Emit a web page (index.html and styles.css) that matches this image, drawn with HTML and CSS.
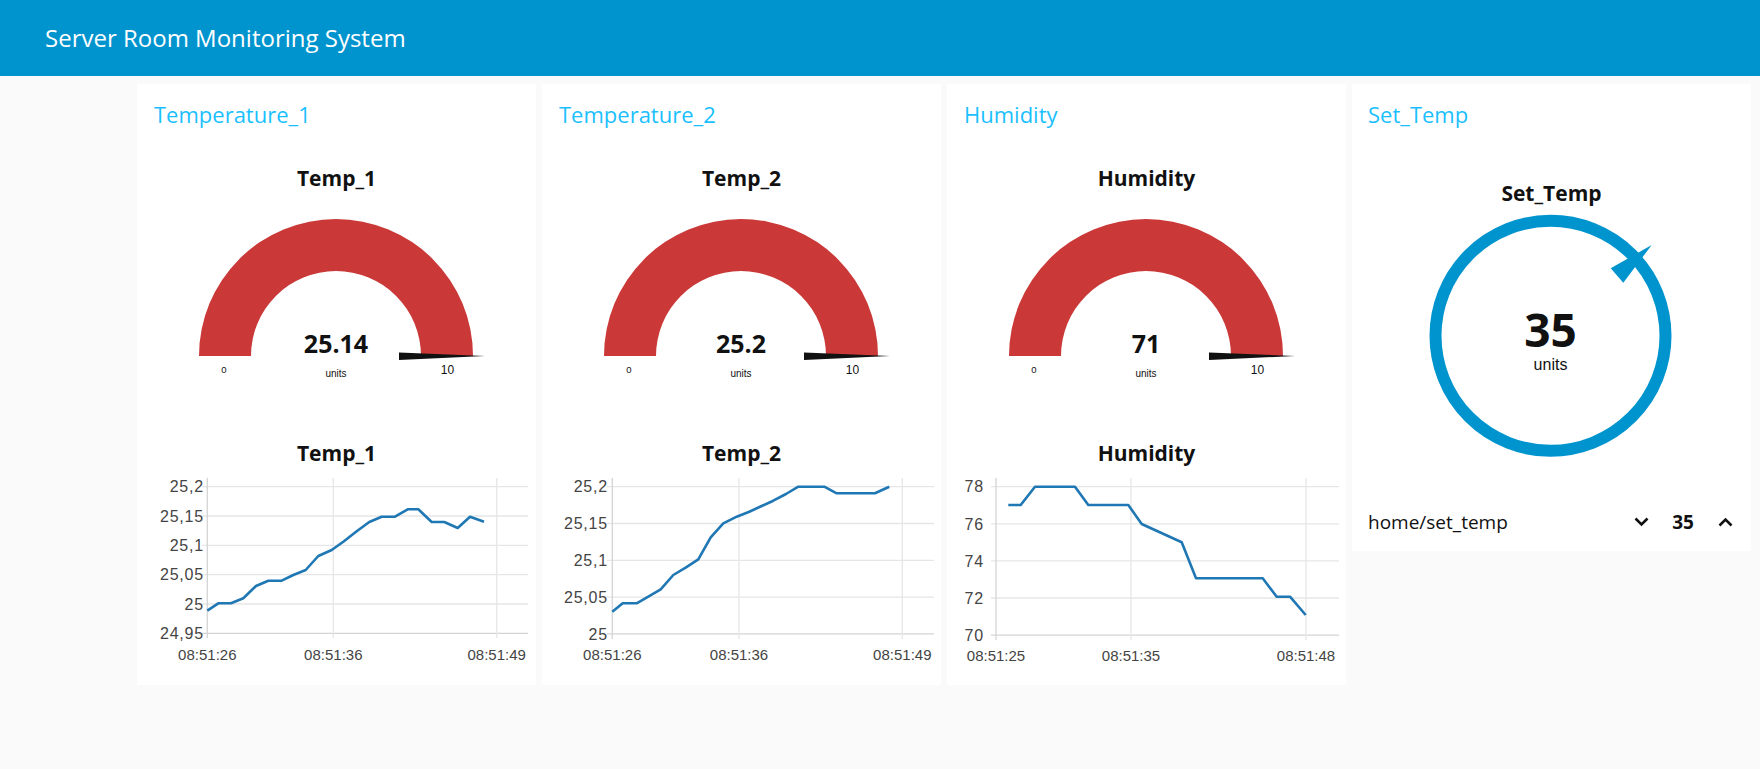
FILE: index.html
```html
<!DOCTYPE html>
<html lang="en">
<head>
<meta charset="utf-8">
<title>Server Room Monitoring System</title>
<link rel="stylesheet" href="styles.css">
</head>
<body>
<header class="topbar">Server Room Monitoring System</header>
<main class="board">
  <section class="card card-tall">
    <div class="group-title">Temperature_1</div>
    <svg class="gauge" width="399" height="250" viewBox="0 0 399 250">
      <text class="g-title" x="199.5" y="41">Temp_1</text>
      <path class="g-arc" d="M62 211 A137 137 0 0 1 336 211 L284 211 A85 85 0 0 0 114 211 Z"/>
      <polygon class="g-needle" points="262,207.5 348,211 262,215"/>
      <text class="g-value" x="199" y="208.3">25.14</text>
      <text class="g-min" x="87" y="228">0</text>
      <text class="g-units" x="199" y="232">units</text>
      <text class="g-max" x="310.5" y="228.5">10</text>
    </svg>
    <svg class="chart" width="399" height="290" viewBox="0 0 399 290">
      <text class="c-title" x="199.5" y="66">Temp_1</text>
      <g class="grid">
        <line x1="65" y1="91.7" x2="391" y2="91.7"/>
        <line x1="65" y1="121" x2="391" y2="121"/>
        <line x1="65" y1="150.3" x2="391" y2="150.3"/>
        <line x1="65" y1="179.7" x2="391" y2="179.7"/>
        <line x1="65" y1="209" x2="391" y2="209"/>
        <line class="axis" x1="65" y1="238.3" x2="391" y2="238.3"/>
        <line class="axis" x1="70.3" y1="83" x2="70.3" y2="243"/>
        <line x1="196.3" y1="83" x2="196.3" y2="243"/>
        <line x1="359.7" y1="83" x2="359.7" y2="243"/>
      </g>
      <g class="ylab">
        <text x="67" y="97">25,2</text>
        <text x="67" y="126.5">25,15</text>
        <text x="67" y="155.5">25,1</text>
        <text x="67" y="185">25,05</text>
        <text x="67" y="214.5">25</text>
        <text x="67" y="243.5">24,95</text>
      </g>
      <g class="xlab">
        <text x="70.3" y="265">08:51:26</text>
        <text x="196.3" y="265">08:51:36</text>
        <text x="359.7" y="265">08:51:49</text>
      </g>
      <polyline class="series" points="70.3,215.7 81.3,208.3 94,208.3 106.3,203.3 119,191 131.3,185.7 144.7,185.7 156.3,180 168.7,175 181.3,161 194.7,155 206.3,146.7 219.7,136.3 232.3,127 244.7,121.7 258,121.7 270.7,114.3 281.3,114.3 294.7,127 307.3,127 320.7,133 333,121.7 347,126.7"/>
    </svg>
  </section>

  <section class="card card-tall">
    <div class="group-title">Temperature_2</div>
    <svg class="gauge" width="399" height="250" viewBox="0 0 399 250">
      <text class="g-title" x="199.5" y="41">Temp_2</text>
      <path class="g-arc" d="M62 211 A137 137 0 0 1 336 211 L284 211 A85 85 0 0 0 114 211 Z"/>
      <polygon class="g-needle" points="262,207.5 348,211 262,215"/>
      <text class="g-value" x="199" y="208.3">25.2</text>
      <text class="g-min" x="87" y="228">0</text>
      <text class="g-units" x="199" y="232">units</text>
      <text class="g-max" x="310.5" y="228.5">10</text>
    </svg>
    <svg class="chart" width="399" height="290" viewBox="0 0 399 290">
      <text class="c-title" x="199.5" y="66">Temp_2</text>
      <g class="grid">
        <line x1="65" y1="91.7" x2="392" y2="91.7"/>
        <line x1="65" y1="128.5" x2="392" y2="128.5"/>
        <line x1="65" y1="165.3" x2="392" y2="165.3"/>
        <line x1="65" y1="202.1" x2="392" y2="202.1"/>
        <line class="axis" x1="65" y1="238.9" x2="392" y2="238.9"/>
        <line class="axis" x1="70.3" y1="83" x2="70.3" y2="244"/>
        <line x1="197" y1="83" x2="197" y2="244"/>
        <line x1="360.3" y1="83" x2="360.3" y2="244"/>
      </g>
      <g class="ylab">
        <text x="66" y="97">25,2</text>
        <text x="66" y="134">25,15</text>
        <text x="66" y="171">25,1</text>
        <text x="66" y="207.5">25,05</text>
        <text x="66" y="244.5">25</text>
      </g>
      <g class="xlab">
        <text x="70.3" y="265">08:51:26</text>
        <text x="197" y="265">08:51:36</text>
        <text x="360.3" y="265">08:51:49</text>
      </g>
      <polyline class="series" points="70.3,216.7 80.7,208.3 94.7,208.3 106.3,201.7 118.7,194.3 131.3,180 143.7,172.7 156.3,164.3 168.7,142.3 181.3,128.3 194.7,121.7 207.3,116.7 219.7,111 231.3,105.7 244,99 256.3,91.7 269,91.7 282.3,91.7 294.7,98.3 308,98.3 320.7,98.3 333,98.3 347.3,91.7"/>
    </svg>
  </section>

  <section class="card card-tall">
    <div class="group-title">Humidity</div>
    <svg class="gauge" width="399" height="250" viewBox="0 0 399 250">
      <text class="g-title" x="199.5" y="41">Humidity</text>
      <path class="g-arc" d="M62 211 A137 137 0 0 1 336 211 L284 211 A85 85 0 0 0 114 211 Z"/>
      <polygon class="g-needle" points="262,207.5 348,211 262,215"/>
      <text class="g-value" x="199" y="208.3">71</text>
      <text class="g-min" x="87" y="228">0</text>
      <text class="g-units" x="199" y="232">units</text>
      <text class="g-max" x="310.5" y="228.5">10</text>
    </svg>
    <svg class="chart" width="399" height="290" viewBox="0 0 399 290">
      <text class="c-title" x="199.5" y="66">Humidity</text>
      <g class="grid">
        <line x1="44" y1="91.7" x2="392" y2="91.7"/>
        <line x1="44" y1="128.8" x2="392" y2="128.8"/>
        <line x1="44" y1="165.9" x2="392" y2="165.9"/>
        <line x1="44" y1="203" x2="392" y2="203"/>
        <line class="axis" x1="44" y1="240.1" x2="392" y2="240.1"/>
        <line class="axis" x1="49" y1="83" x2="49" y2="245"/>
        <line x1="184" y1="83" x2="184" y2="245"/>
        <line x1="359" y1="83" x2="359" y2="245"/>
      </g>
      <g class="ylab">
        <text x="37" y="97">78</text>
        <text x="37" y="134.5">76</text>
        <text x="37" y="171.5">74</text>
        <text x="37" y="208.5">72</text>
        <text x="37" y="245.5">70</text>
      </g>
      <g class="xlab">
        <text x="49" y="266">08:51:25</text>
        <text x="184" y="266">08:51:35</text>
        <text x="359" y="266">08:51:48</text>
      </g>
      <polyline class="series" points="61.3,110 73.7,110 88,91.7 128,91.7 141.3,110 181.3,110 194.7,129 234.7,147.3 249,183.3 315.7,183.3 329.7,201.7 343,201.7 358.7,220"/>
    </svg>
  </section>

  <section class="card card-short">
    <div class="group-title">Set_Temp</div>
    <svg class="knob" width="399" height="347" viewBox="0 0 399 347">
      <text class="g-title" x="199.5" y="56">Set_Temp</text>
      <circle class="k-ring" cx="198.5" cy="190.8" r="115"/>
      <polygon class="k-pointer" points="299.7,100 258.7,123.3 271.3,137.7"/>
      <text class="k-value" x="198.5" y="201.7">35</text>
      <text class="k-units" x="198.5" y="225">units</text>
    </svg>
    <div class="numeric">
      <span class="numeric-label">home/set_temp</span>
      <span class="numeric-btn">
        <svg width="15" height="10" viewBox="0 0 15 10"><path d="M1.5 1.5 L7.5 7.5 L13.5 1.5"/></svg>
      </span>
      <span class="numeric-value">35</span>
      <span class="numeric-btn">
        <svg width="15" height="10" viewBox="0 0 15 10"><path d="M1.5 8.5 L7.5 2.5 L13.5 8.5"/></svg>
      </span>
    </div>
  </section>
</main>
</body>
</html>
```

FILE: styles.css
```css
* { box-sizing: border-box; }

html, body {
  margin: 0;
  padding: 0;
}

body {
  background: #fafafa;
  font-family: "Open Sans", "Noto Sans", sans-serif;
  color: #111;
  width: 1760px;
  height: 769px;
  overflow: hidden;
}

.topbar {
  height: 76px;
  background: #0094ce;
  color: #ffffff;
  font-size: 24px;
  display: flex;
  align-items: center;
  padding-left: 45px;
  padding-bottom: 2px;
}

.board {
  display: flex;
  align-items: flex-start;
  gap: 6px;
  padding: 8px 0 0 137px;
}

.card {
  width: 399px;
  background: #ffffff;
  display: flex;
  flex-direction: column;
}

.card-tall { height: 601px; }
.card-short { height: 467px; }

.group-title {
  height: 61px;
  line-height: 61px;
  padding-left: 17px;
  font-size: 22px;
  color: #1bbfff;
}

.card-short .group-title { padding-left: 16px; }

.gauge, .chart, .knob { display: block; }

.g-title, .c-title {
  font-family: "Open Sans", sans-serif;
  font-weight: 700;
  font-size: 21px;
  fill: #111;
  text-anchor: middle;
}

.g-arc { fill: #ca3838; }
.g-needle { fill: #111; }

.g-value {
  font-family: "Open Sans", sans-serif;
  font-weight: 700;
  font-size: 25px;
  fill: #111;
  text-anchor: middle;
}

.g-min, .g-units, .g-max {
  font-family: "Liberation Sans", Arial, sans-serif;
  fill: #111;
  text-anchor: middle;
}
.g-min { font-size: 9.5px; }
.g-units { font-size: 10px; }
.g-max { font-size: 12px; }

.grid line {
  stroke: #e6e6e6;
  stroke-width: 1.3;
}
.grid line.axis { stroke: #d4d4d4; }

.ylab text, .xlab text {
  font-family: "Liberation Sans", Arial, sans-serif;
  font-size: 15px;
  fill: #444;
}
.ylab text {
  text-anchor: end;
  font-size: 16px;
  letter-spacing: 0.8px;
}
.xlab text { text-anchor: middle; }

.series {
  fill: none;
  stroke: #1f77b4;
  stroke-width: 2.6;
  stroke-linejoin: round;
}

.k-ring {
  fill: none;
  stroke: #0094ce;
  stroke-width: 12;
}
.k-pointer { fill: #0094ce; }

.k-value {
  font-family: "Open Sans", sans-serif;
  font-weight: 700;
  font-size: 46px;
  fill: #111;
  text-anchor: middle;
}
.k-units {
  font-family: "Liberation Sans", Arial, sans-serif;
  font-size: 16px;
  fill: #111;
  text-anchor: middle;
}

.numeric {
  flex: 1;
  display: flex;
  align-items: center;
  padding: 0 12px 0 16px;
}

.numeric-label {
  flex: 1;
  font-size: 19px;
  color: #111;
}

.numeric-btn {
  width: 28px;
  display: flex;
  justify-content: center;
  align-items: center;
}

.numeric-btn path {
  fill: none;
  stroke: #111;
  stroke-width: 2.6;
}

.numeric-value {
  width: 56px;
  text-align: center;
  font-weight: 700;
  font-size: 19px;
}
```
